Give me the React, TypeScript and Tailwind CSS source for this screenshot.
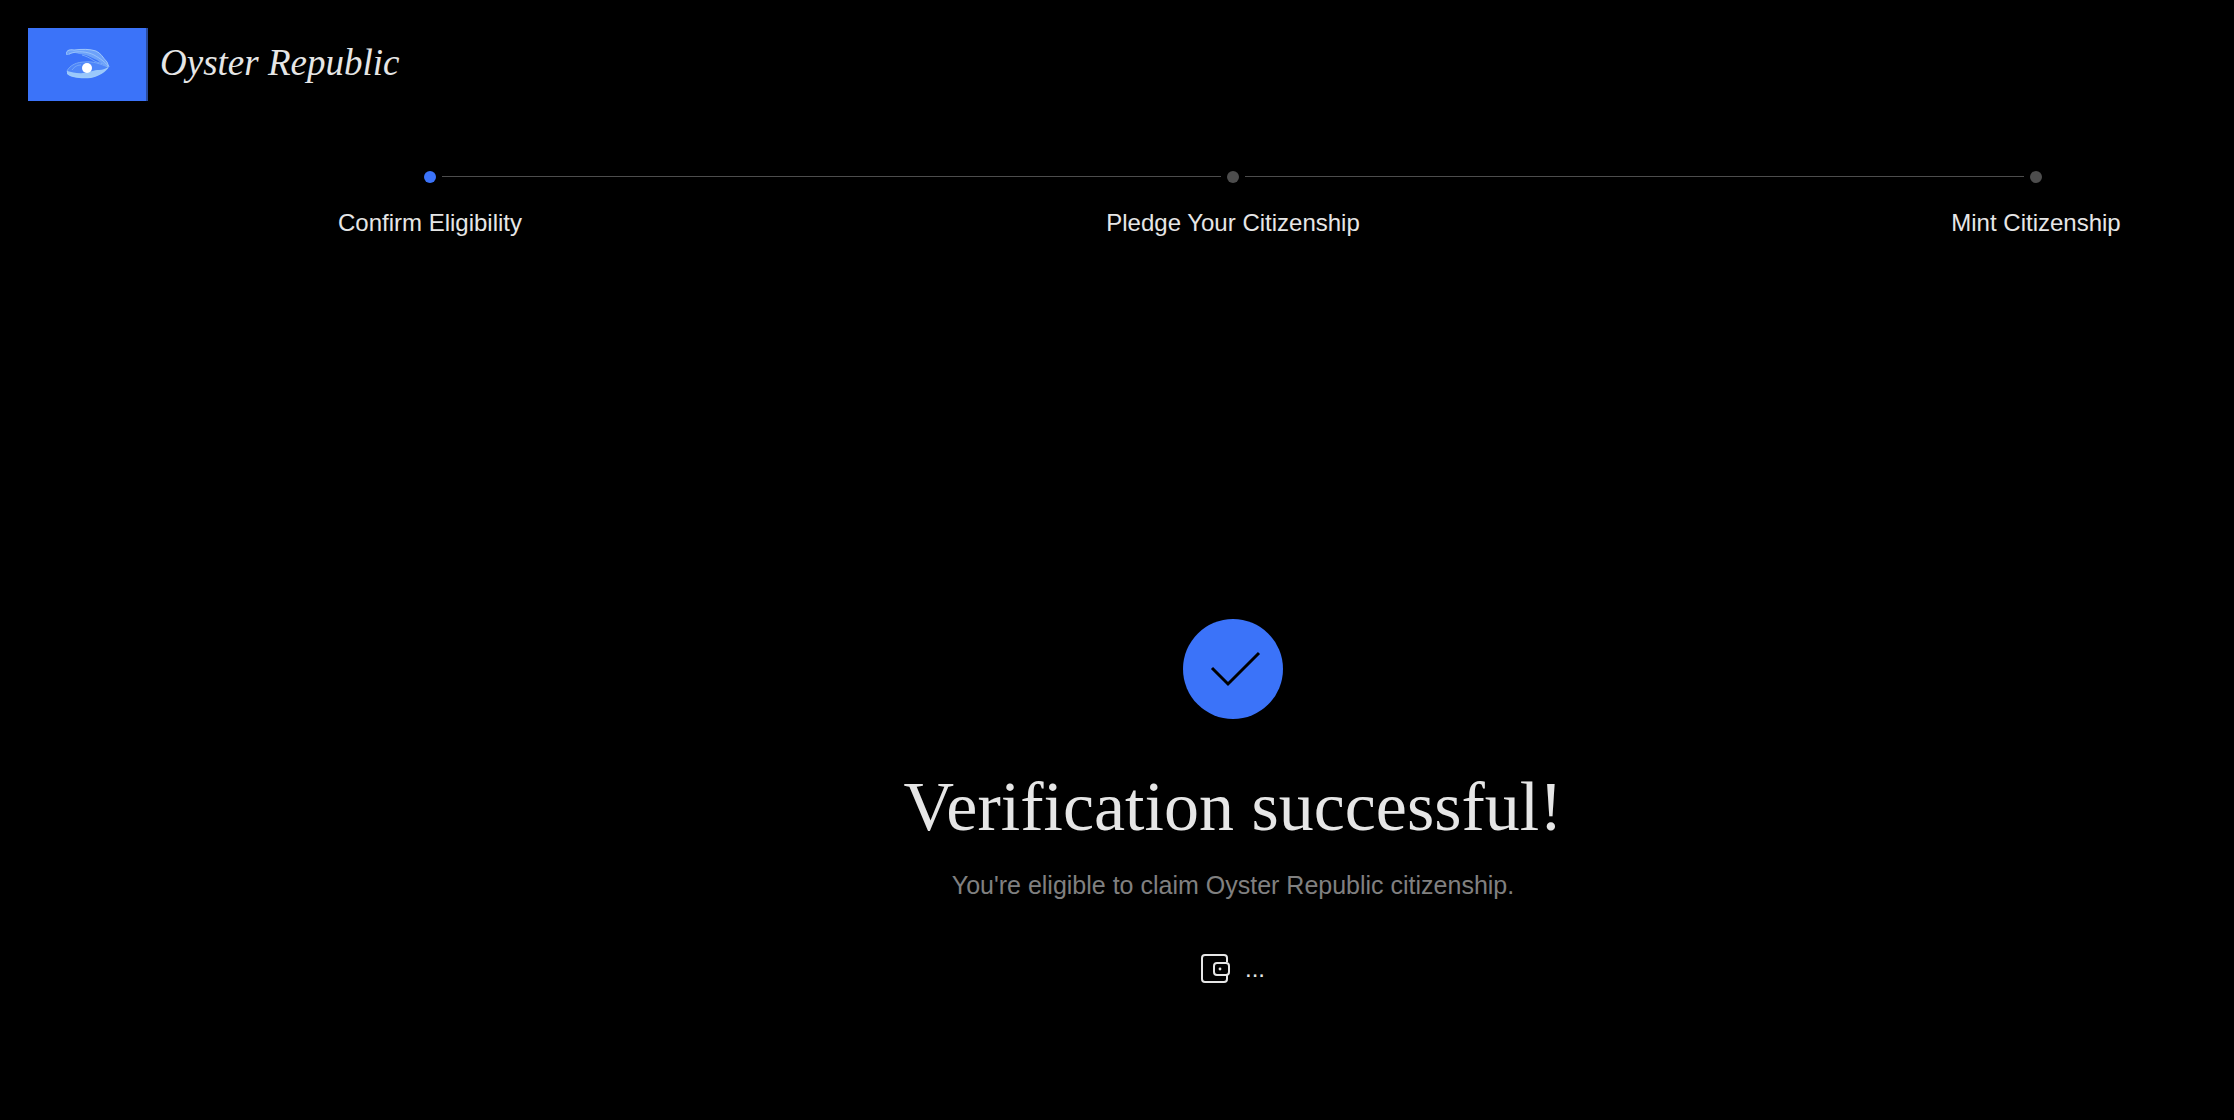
import { Fragment } from "react";

const steps = [
  { label: "Confirm Eligibility", active: true },
  { label: "Pledge Your Citizenship", active: false },
  { label: "Mint Citizenship", active: false },
];

function Logo() {
  return (
    <svg width="120" height="73" viewBox="0 0 120 73" role="img" aria-label="Oyster Republic logo">
      <rect width="120" height="73" fill="#3b73f9" />
      <rect x="118" width="2" height="73" fill="#2a4b9c" />
      {/* upper shell */}
      <path
        d="M39 27 C37 23 41 21 46 22 C54 21 62 21 68 23 C73 25 75 30 79 34 L81 39 C77 36 73 36 69 32 C64 30 58 26 51 26 C46 24 43 25 41 27 Z"
        fill="#7fb1fa"
        opacity="0.75"
      />
      <path
        d="M39 27 C37 23 41 21 46 22 C54 21 62 21 68 23 C73 25 75 30 79 34 L81 39"
        fill="none"
        stroke="#b0d6fb"
        strokeWidth="1"
        opacity="0.8"
      />
      <path d="M41 26 C50 22 60 24 66 27 C73 31 77 34 80 38" fill="none" stroke="#b0d6fb" strokeWidth="1" opacity="0.6" />
      <path d="M54 27 C62 29 66 34 72 35 C75 36 78 37 80 39" fill="none" stroke="#8fbffa" strokeWidth="1" opacity="0.7" />
      {/* lower shell */}
      <path
        d="M39 43 C42 37 49 34 57 34 C65 33 72 36 80 39 C76 44 70 48 63 49 C54 50 44 49 40 46 Z"
        fill="#5b93fa"
        opacity="0.6"
        stroke="#9ccafb"
        strokeWidth="1"
      />
      <path d="M39 43 C44 44 50 46 55 45 C62 44 66 42 71 42 C75 42 78 40 81 39 C78 44 71 48 63 50 C54 51 43 50 39 46 Z" fill="#a3cffb" opacity="0.9" />
      <path d="M44 42 C47 38 50 37 53 37" fill="none" stroke="#8fbffa" strokeWidth="1" opacity="0.6" />
      <circle cx="59" cy="40" r="5" fill="#fff" />
    </svg>
  );
}

function WalletIcon() {
  return (
    <svg width="30" height="30" viewBox="0 0 30 30" fill="none" stroke="#e6e6e6" strokeWidth="2" aria-hidden="true">
      <path d="M26 8 V4 A3 3 0 0 0 23 1 H4 A3 3 0 0 0 1 4 V25 A3 3 0 0 0 4 28 H23 A3 3 0 0 0 26 25 V21" />
      <rect x="13" y="9" width="15" height="12" rx="3" />
      <circle cx="19" cy="15" r="1.4" fill="#e6e6e6" stroke="none" />
    </svg>
  );
}

export default function App() {
  return (
    <div className="min-h-screen bg-black font-['Liberation_Sans',Arial,sans-serif] text-[#e6e6e6]">
      <header className="flex items-center gap-3 p-7">
        <Logo />
        <span className="pb-1 font-['Liberation_Serif',serif] text-[37px] leading-10 italic">Oyster Republic</span>
      </header>

      <div className="pl-58">
        <ol className="mt-[42px] flex items-start gap-1.5 px-48">
          {steps.map((step, index) => (
            <Fragment key={step.label}>
              {index > 0 && <li aria-hidden="true" className="mt-[5px] h-px flex-1 bg-[#4d4d4d]" />}
              <li className="flex w-3 flex-col items-center gap-6" aria-current={step.active ? "step" : undefined}>
                <span className={`h-3 w-3 rounded-full ${step.active ? "bg-[#3b73f9]" : "bg-[#4d4d4d]"}`} />
                <span className="text-2xl whitespace-nowrap">{step.label}</span>
              </li>
            </Fragment>
          ))}
        </ol>

        <main className="flex flex-col items-center pt-[380px] pb-16 text-center">
          <svg width="100" height="100" viewBox="0 0 100 100" aria-hidden="true">
            <circle cx="50" cy="50" r="50" fill="#3b73f9" />
            <path d="M29 49 L45 65 L76 34" fill="none" stroke="#000" strokeWidth="3" />
          </svg>
          <h1 className="mt-12 font-['Liberation_Serif',serif] text-[70px] leading-20">Verification successful!</h1>
          <p className="mt-5 text-[25px] leading-9 text-[#808080]">You're eligible to claim Oyster Republic citizenship.</p>
          <button type="button" className="mt-[50px] flex items-center gap-3.5 text-2xl">
            <WalletIcon />
            ...
          </button>
        </main>
      </div>
    </div>
  );
}
